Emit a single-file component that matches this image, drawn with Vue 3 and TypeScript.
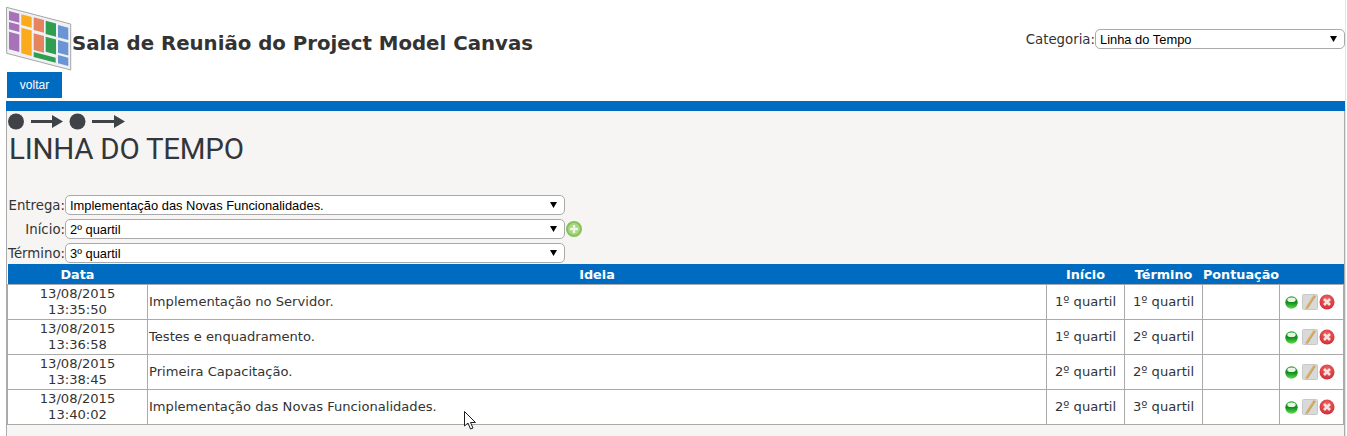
<script setup lang="ts">
interface Row {
  date: string
  time: string
  idea: string
  start: string
  end: string
}

const rows: Row[] = [
  { date: '13/08/2015', time: '13:35:50', idea: 'Implementação no Servidor.', start: '1º quartil', end: '1º quartil' },
  { date: '13/08/2015', time: '13:36:58', idea: 'Testes e enquadramento.', start: '1º quartil', end: '2º quartil' },
  { date: '13/08/2015', time: '13:38:45', idea: 'Primeira Capacitação.', start: '2º quartil', end: '2º quartil' },
  { date: '13/08/2015', time: '13:40:02', idea: 'Implementação das Novas Funcionalidades.', start: '2º quartil', end: '3º quartil' },
]

const quartis = ['1º quartil', '2º quartil', '3º quartil', '4º quartil']

// logo cells: left, right, top and bottom at the left edge, all sheared by the same slope
const slope = 0.26
const cell = (x0: number, x1: number, top: number, bottom: number, fill: string) => {
  const d = (x1 - x0) * slope
  return { fill, points: `${x0},${top} ${x1},${top + d} ${x1},${bottom + d} ${x0},${bottom}` }
}
const logoCells = [
  cell(3, 13.3, 5, 14, '#a872b8'),
  cell(3, 13.3, 16, 23.3, '#a872b8'),
  cell(3, 13.3, 25.7, 43.3, '#a872b8'),
  cell(15.3, 25.7, 8.3, 19, '#fbaa1c'),
  cell(15.3, 25.7, 21.7, 47.3, '#fbaa1c'),
  cell(27.7, 38, 11.3, 24, '#e4855f'),
  cell(27.7, 38, 27.3, 44, '#e4855f'),
  cell(39.7, 50, 14.7, 28, '#2f9e4f'),
  cell(39.7, 50, 30.7, 45.7, '#2f9e4f'),
  cell(27.7, 49.7, 46, 51, '#2f9e4f'),
  cell(52, 62.3, 19, 31.3, '#6b94d4'),
  cell(52, 62.3, 34, 46.7, '#6b94d4'),
  cell(52, 62.3, 49, 57.3, '#6b94d4'),
]
</script>

<template>
  <div class="page">
    <header class="top">
      <div class="brand">
        <svg class="logo" width="66" height="66" viewBox="0 0 66 66">
          <polygon points="0.500,1.300 64.700,18 64.700,64 0.700,47.300" fill="#eef0f4" stroke="#a6a6a6" />
          <polygon v-for="c in logoCells" :key="c.points" :points="c.points" :fill="c.fill" />
        </svg>
        <h1 class="title">Sala de Reunião do Project Model Canvas</h1>
      </div>
      <label class="category">
        Categoria:<select class="select select--category">
          <option>Linha do Tempo</option>
        </select>
      </label>
    </header>

    <button type="button" class="back">voltar</button>
    <div class="rule"></div>

    <section class="panel">
      <div class="panel-logo">
        <svg class="flow" width="120" height="18" viewBox="0 0 120 18">
          <circle cx="8" cy="8.500" r="8" fill="#3f4246" />
          <path d="M23 7 H44 V2 L55 8.500 L44 15 V10 H23 Z" fill="#3f4246" />
          <circle cx="69.500" cy="8.500" r="8" fill="#3f4246" />
          <path d="M84 7 H106 V2 L117 8.500 L106 15 V10 H84 Z" fill="#3f4246" />
        </svg>
        <div class="panel-name">LINHA DO TEMPO</div>
      </div>

      <form class="filters" @submit.prevent>
        <div class="filter">
          <label class="filter-label">Entrega:</label>
          <select class="select select--filter">
            <option>Implementação das Novas Funcionalidades.</option>
          </select>
        </div>
        <div class="filter">
          <label class="filter-label">Início:</label>
          <select class="select select--filter">
            <option v-for="q in quartis" :key="q" :selected="q === '2º quartil'">{{ q }}</option>
          </select>
          <svg class="add" width="18" height="18" viewBox="0 0 18 18">
            <circle cx="9" cy="9" r="7" fill="#a9d585" stroke="#84c25a" stroke-width="2" />
            <path d="M9 5 V13 M5 9 H13" stroke="#eef7e4" stroke-width="2.400" />
          </svg>
        </div>
        <div class="filter">
          <label class="filter-label">Término:</label>
          <select class="select select--filter">
            <option v-for="q in quartis" :key="q" :selected="q === '3º quartil'">{{ q }}</option>
          </select>
        </div>
      </form>

      <table class="ideas">
        <thead>
          <tr>
            <th class="col-date">Data</th>
            <th>Ideia</th>
            <th class="col-q">Início</th>
            <th class="col-q">Término</th>
            <th class="col-score">Pontuação</th>
            <th class="col-actions"></th>
          </tr>
        </thead>
        <tbody>
          <tr v-for="row in rows" :key="row.time">
            <td class="center">{{ row.date }}<br />{{ row.time }}</td>
            <td>{{ row.idea }}</td>
            <td class="center">{{ row.start }}</td>
            <td class="center">{{ row.end }}</td>
            <td></td>
            <td class="actions">
              <svg class="ball" width="13" height="13" viewBox="0 0 13 13">
                <defs>
                  <linearGradient id="ball-green" x1="0" y1="0" x2="0" y2="1">
                    <stop offset="0" stop-color="#2fa536" />
                    <stop offset="0.500" stop-color="#108f1c" />
                    <stop offset="1" stop-color="#5fdc4f" />
                  </linearGradient>
                </defs>
                <circle cx="6.500" cy="6.500" r="6.200" fill="url(#ball-green)" />
                <ellipse cx="6.500" cy="3.800" rx="4.200" ry="2.300" fill="#e6f7e4" />
              </svg>
              <svg class="edit" width="17" height="17" viewBox="0 0 17 17">
                <rect x="0.500" y="0.500" width="15" height="15" rx="1" fill="#d9d9d9" stroke="#c8c8c8" />
                <path d="M12.500 1.500 L4 14.500" stroke="#dcae55" stroke-width="2" />
                <path d="M13.500 2 L5.500 14.500" stroke="#98855a" stroke-width="0.600" />
              </svg>
              <svg class="remove" width="16" height="16" viewBox="0 0 16 16">
                <defs>
                  <radialGradient id="ball-red" cx="0.500" cy="0.350" r="0.700">
                    <stop offset="0" stop-color="#ee6a68" />
                    <stop offset="1" stop-color="#cf2730" />
                  </radialGradient>
                </defs>
                <circle cx="8" cy="8" r="7.500" fill="url(#ball-red)" />
                <path d="M5 5 L11 11 M11 5 L5 11" stroke="#f8e2e2" stroke-width="2.600" />
              </svg>
            </td>
          </tr>
        </tbody>
      </table>
    </section>

    <svg class="cursor" width="13" height="19" viewBox="0 0 13 19">
      <path d="M0.500 0.500 V15 L4 12 L6.500 18 L9 17 L6.500 11.500 L11.500 11.500 Z" fill="#fff" stroke="#1c1c1c" stroke-width="1" />
    </svg>
  </div>
</template>

<style>
html,
body {
  background: #fff;
  overflow: hidden;
}
</style>

<style scoped>
.page {
  position: relative;
  box-sizing: border-box;
  width: 1346px;
  height: 436px;
  padding: 5px 0 0 6px;
  border-right: 1px solid #e4e4e4;
  font-family: "DejaVu Sans", Verdana, sans-serif;
  font-size: 13.300px;
  color: #333;
  overflow: hidden;
}
.top {
  display: flex;
  justify-content: space-between;
  height: 67px;
}
.brand {
  display: flex;
  align-items: flex-start;
}
.logo {
  flex: none;
  margin-top: 1px;
}
.title {
  margin: 25px 0 0;
  font-size: 19.750px;
  line-height: 28px;
  font-weight: 700;
  color: #333;
}
.category {
  display: flex;
  align-items: center;
  height: 20px;
  margin-top: 24px;
  margin-right: 0;
}
.select {
  appearance: none;
  height: 20px;
  box-sizing: border-box;
  border: 1px solid #aaa;
  border-radius: 5px;
  background-color: #fff;
  background-image: url("data:image/svg+xml,%3Csvg xmlns='http://www.w3.org/2000/svg' width='7' height='6'%3E%3Cpath d='M0 0H7L3.500 6Z' fill='%23000'/%3E%3C/svg%3E");
  background-repeat: no-repeat;
  background-position: right 7px center;
  color: #000;
  font-family: "Liberation Sans", Arial, sans-serif;
  font-size: 12.900px;
  padding: 0 0 0 4px;
}
.select--category {
  width: 250px;
}
.select--filter {
  width: 500px;
}
.back {
  display: block;
  width: 55px;
  height: 26px;
  margin-left: 1px;
  border: 0;
  padding: 0;
  background: #006cc1;
  color: #fff;
  font-family: "Liberation Sans", Arial, sans-serif;
  font-size: 12px;
}
.rule {
  height: 10px;
  margin-top: 3px;
  background: #006cc1;
}
.panel {
  height: 340px;
  box-sizing: border-box;
  border-left: 1px solid #aaa;
  border-right: 1px solid #aaa;
  background: #f6f5f4;
}
.panel-logo {
  height: 82px;
  padding: 2px 0 0 1px;
}
.flow {
  display: block;
}
.panel-name {
  font-family: "Roboto", sans-serif;
  font-size: 29.500px;
  line-height: 32px;
  margin-top: 2px;
  margin-left: 1px;
  color: #33363a;
  letter-spacing: -0.250px;
}
.filters {
  display: flex;
  flex-direction: column;
  gap: 4px;
}
.filter {
  display: flex;
  align-items: center;
  height: 20px;
}
.filter-label {
  width: 58px;
  text-align: right;
  flex: none;
}
.add {
  margin-left: 0;
}
.ideas {
  width: 1337px;
  margin-top: 1px;
  border-collapse: collapse;
  table-layout: fixed;
  background: #fff;
}
.ideas th {
  height: 20px;
  padding: 0;
  background: #006cc1;
  color: #fff;
  font-size: 12.800px;
  font-weight: 700;
  text-align: center;
}
.col-date {
  width: 140px;
}
.col-q {
  width: 78px;
}
.col-score {
  width: 77px;
}
.col-actions {
  width: 64px;
}
.ideas td {
  height: 34px;
  padding: 0 0 0 1px;
  border: 1px solid #aaa;
  font-size: 13.100px;
  line-height: 16px;
  color: #333;
}
.ideas td.center {
  text-align: center;
  padding: 0;
}
.ideas td.actions {
  padding: 0 0 0 5px;
  white-space: nowrap;
}
.actions svg {
  vertical-align: middle;
}
.edit {
  margin-left: 4px;
}
.cursor {
  position: absolute;
  left: 464px;
  top: 411px;
}
</style>
